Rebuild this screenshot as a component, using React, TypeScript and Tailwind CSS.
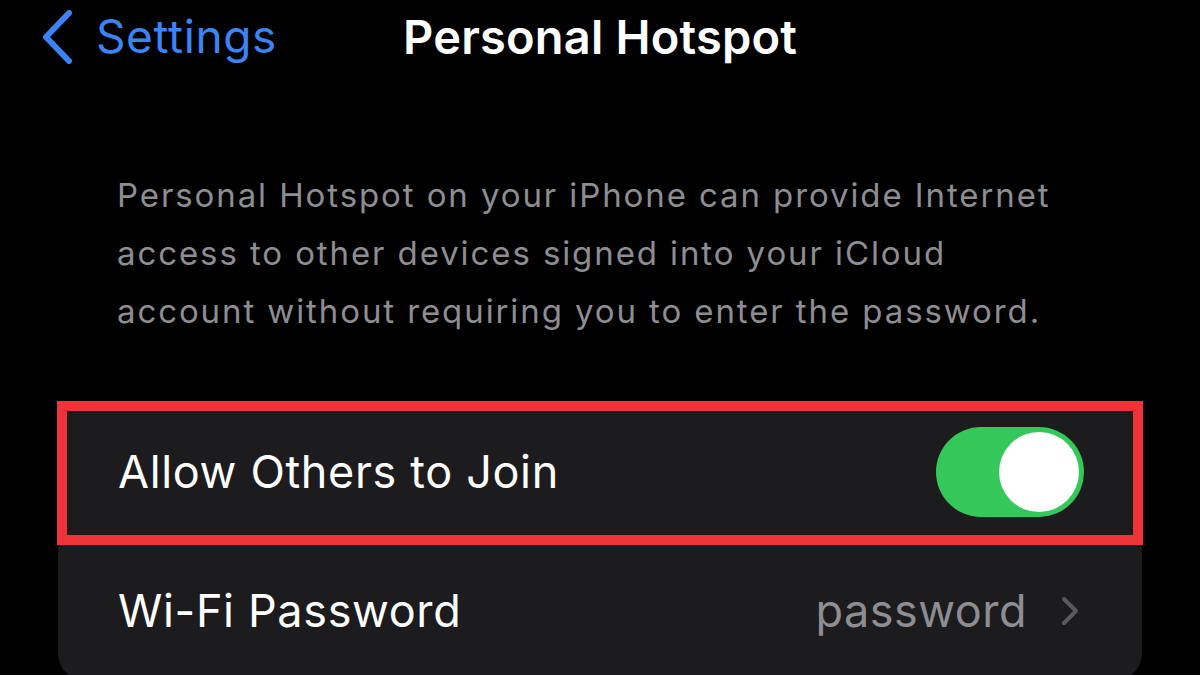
import React from "react";

export default function App() {
  return (
    <div
      className="w-[1200px] h-[675px] bg-black overflow-hidden relative"
      style={{ fontFamily: "Inter, 'Noto Sans', sans-serif" }}
    >
      {/* Nav bar */}
      <div className="h-[72px] flex items-center relative">
        <div className="flex items-center pl-[40px]">
          <svg width="34" height="56" viewBox="0 0 34 56" className="mt-[0px]">
            <path
              d="M29 5 L6 29 L29 53"
              fill="none"
              stroke="#3a84f6"
              strokeWidth="6"
              strokeLinecap="round"
              strokeLinejoin="round"
            />
          </svg>
          <span className="ml-[22px] text-[46px] text-[#3a84f6] leading-none tracking-[0.6px]">
            Settings
          </span>
        </div>
        <div className="absolute left-[403px] top-0 h-[72px] flex items-center">
          <span className="text-[47px] font-semibold text-white leading-none tracking-[0.2px]">
            Personal Hotspot
          </span>
        </div>
      </div>

      {/* Description */}
      <div className="pl-[117px] pt-[94px] text-[33px] leading-[58px] text-[#8d8d92] tracking-[1.9px]">
        <p>Personal Hotspot on your iPhone can provide Internet</p>
        <p>access to other devices signed into your iCloud</p>
        <p>account without requiring you to enter the password.</p>
      </div>

      {/* Card */}
      <div className="mt-[63px] mx-[58px] bg-[#1c1c1e] rounded-[28px] overflow-hidden">
        <div className="h-[138px] flex items-center justify-between pl-[60px] pr-[58px]">
          <span className="text-[45px] text-white tracking-[0.65px]">Allow Others to Join</span>
          <div className="w-[148px] h-[90px] rounded-full bg-[#34c759] relative">
            <div className="absolute right-[5px] top-[5px] w-[80px] h-[80px] rounded-full bg-white" />
          </div>
        </div>
        <div className="h-[140px] flex items-center justify-between pl-[60px] pr-[62px]">
          <span className="text-[45px] text-white tracking-[0.65px]">Wi-Fi Password</span>
          <div className="flex items-center">
            <span className="text-[45px] text-[#8d8d92] tracking-[0.5px]">password</span>
            <svg width="20" height="32" viewBox="0 0 20 32" className="ml-[33px]">
              <path
                d="M4 4 L16 16 L4 28"
                fill="none"
                stroke="#5a5a5f"
                strokeWidth="4"
                strokeLinecap="round"
                strokeLinejoin="round"
              />
            </svg>
          </div>
        </div>
      </div>

      {/* Red highlight box */}
      <div className="absolute left-[57px] top-[401px] w-[1086px] h-[144px] border-[10px] border-[#ee3439] pointer-events-none" />
    </div>
  );
}
